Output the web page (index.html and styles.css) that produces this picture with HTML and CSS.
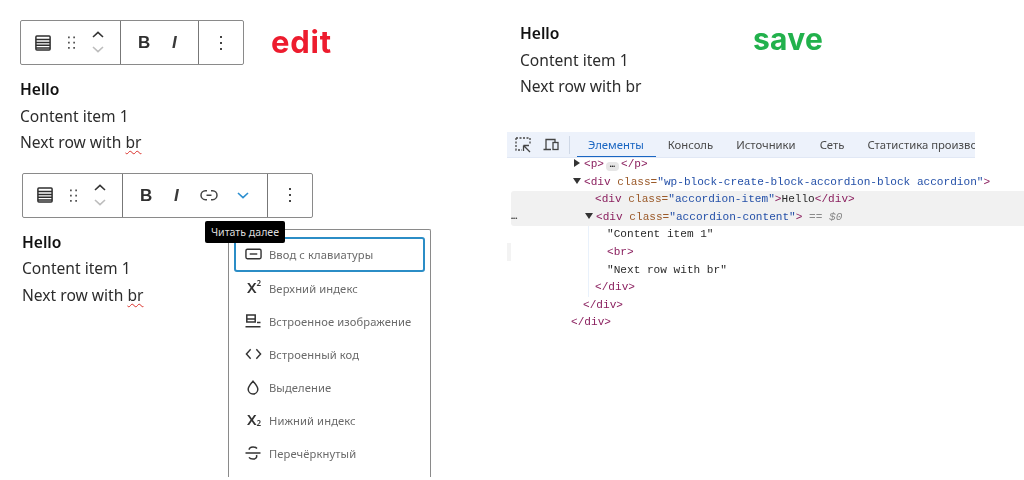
FILE: index.html
```html
<!DOCTYPE html>
<html lang="ru">
<head>
<meta charset="utf-8">
<title>edit / save</title>
<link rel="stylesheet" href="styles.css">
</head>
<body>
<main class="page">
  <section class="left">
    <div class="head">
      <div class="toolbar">
        <div class="seg seg-block">
          <svg class="ic ic-table" viewBox="0 0 16 16"><rect x="0.9" y="0.9" width="14.2" height="14.2" rx="1" class="st"/><path d="M1 4.6h14M1 7.4h14M1 10.2h14M1 13h14" class="st"/></svg>
          <svg class="ic ic-drag" viewBox="0 0 8 14"><path d="M0 0h2v2H0zM6 0h2v2H6zM0 6h2v2H0zM6 6h2v2H6zM0 12h2v2H0zM6 12h2v2H6z" class="fl"/></svg>
          <span class="mover">
            <svg class="chev" viewBox="0 0 12 7"><path d="M1 6l5-4.6L11 6" class="st"/></svg>
            <svg class="chev off" viewBox="0 0 12 7"><path d="M1 1l5 4.6L11 1" class="st"/></svg>
          </span>
        </div>
        <div class="seg seg-format">
          <span class="fmt-b">B</span>
          <span class="fmt-i">I</span>
        </div>
        <div class="seg seg-more">
          <svg class="ic ic-dots" viewBox="0 0 2 14"><path d="M0 0h2v2H0zM0 6h2v2H0zM0 12h2v2H0z" class="fl"/></svg>
        </div>
      </div>
      <span class="tag tag-edit">edit</span>
    </div>
    <div class="text">
      <div class="title">Hello</div>
      <div>Content item 1</div>
      <div>Next row with <span class="typo">br</span></div>
    </div>

    <div class="second">
      <div class="toolbar">
        <div class="seg seg-block">
          <svg class="ic ic-table" viewBox="0 0 16 16"><rect x="0.9" y="0.9" width="14.2" height="14.2" rx="1" class="st"/><path d="M1 4.6h14M1 7.4h14M1 10.2h14M1 13h14" class="st"/></svg>
          <svg class="ic ic-drag" viewBox="0 0 8 14"><path d="M0 0h2v2H0zM6 0h2v2H6zM0 6h2v2H0zM6 6h2v2H6zM0 12h2v2H0zM6 12h2v2H6z" class="fl"/></svg>
          <span class="mover">
            <svg class="chev" viewBox="0 0 12 7"><path d="M1 6l5-4.6L11 6" class="st"/></svg>
            <svg class="chev off" viewBox="0 0 12 7"><path d="M1 1l5 4.6L11 1" class="st"/></svg>
          </span>
        </div>
        <div class="seg seg-format wide">
          <span class="fmt-b">B</span>
          <span class="fmt-i">I</span>
          <svg class="ic ic-link" viewBox="0 0 24 24"><path d="M10 17.389H8.444A5.194 5.194 0 1 1 8.444 7H10v1.5H8.444a3.694 3.694 0 0 0 0 7.389H10v1.5ZM14 7h1.556a5.194 5.194 0 0 1 0 10.39H14v-1.5h1.556a3.694 3.694 0 0 0 0-7.39H14V7Zm-4.5 6h5v-1.5h-5V13Z" class="fl"/></svg>
          <svg class="chev blue" viewBox="0 0 12 7"><path d="M1 1l5 4.6L11 1" class="st"/></svg>
        </div>
        <div class="seg seg-more">
          <svg class="ic ic-dots" viewBox="0 0 2 14"><path d="M0 0h2v2H0zM0 6h2v2H0zM0 12h2v2H0z" class="fl"/></svg>
        </div>
      </div>
      <div class="text">
        <div class="title">Hello</div>
        <div>Content item 1</div>
        <div>Next row with <span class="typo">br</span></div>
      </div>

      <div class="menu">
        <div class="item focus">
          <span class="mi"><svg viewBox="0 0 18 12" class="i18"><rect x="1" y="1" width="16" height="10" rx="1.5" class="st"/><path d="M5 6h8" class="st"/></svg></span>
          <span>Ввод с клавиатуры</span>
        </div>
        <div class="item">
          <span class="mi mi-x">X<sup>2</sup></span>
          <span>Верхний индекс</span>
        </div>
        <div class="item">
          <span class="mi"><svg viewBox="0 0 16 14" class="i16"><path d="M1.8 1h8.4v7H1.8zM2 5h8M0.5 12.8h15M12 8.5h3.5" class="st"/></svg></span>
          <span>Встроенное изображение</span>
        </div>
        <div class="item">
          <span class="mi"><svg viewBox="0 0 18 12" class="i18"><path d="M6 1L1.5 6 6 11M12 1l4.500 5L12 11" class="st"/></svg></span>
          <span>Встроенный код</span>
        </div>
        <div class="item">
          <span class="mi"><svg viewBox="0 0 12 15" class="i12"><path d="M6 1.200c2.400 3 4.800 5.200 4.800 8A4.800 4.800 0 0 1 1.200 9.200C1.200 6.400 3.600 4.200 6 1.200z" class="st"/></svg></span>
          <span>Выделение</span>
        </div>
        <div class="item">
          <span class="mi mi-x">X<sub>2</sub></span>
          <span>Нижний индекс</span>
        </div>
        <div class="item">
          <span class="mi"><svg viewBox="0 0 16 14" class="i16"><path d="M12 2.500C11 1.300 9.500 1 8 1 6 1 4.200 1.800 4.200 3.800M0.500 7h15M11.500 9c.8 2.500-1 4-3.500 4-1.700 0-3.200-.5-4-1.700" class="st"/></svg></span>
          <span>Перечёркнутый</span>
        </div>
      </div>
      <div class="tooltip">Читать далее</div>
    </div>
  </section>

  <section class="right">
    <div class="top">
      <div class="text">
        <div class="title">Hello</div>
        <div>Content item 1</div>
        <div>Next row with br</div>
      </div>
      <span class="tag tag-save">save</span>
    </div>

    <div class="devtools">
      <div class="tabs">
        <svg class="dt-ic" viewBox="0 0 16 16"><path d="M1 1h14v7M1 1v12h6" class="dash"/><path d="M8.500 8.500h5.500M8.500 8.500v5.500M8.500 8.500l6.500 6.500" class="st2"/></svg>
        <svg class="dt-ic second-ic" viewBox="0 0 16 14"><path d="M3 11V1.500h9V4M0.500 11.500h7.500" class="st2"/><rect x="10" y="4.500" width="5" height="7" class="st2"/></svg>
        <span class="sep"></span>
        <span class="tab active">Элементы</span>
        <span class="tab t2">Консоль</span>
        <span class="tab t3">Источники</span>
        <span class="tab t4">Сеть</span>
        <span class="tab t5">Статистика производительности</span>
      </div>
      <div class="code">
        <div class="ln in-p"><span class="arr right-arr"></span><b>&lt;p&gt;</b><span class="pill">•••</span><b>&lt;/p&gt;</b></div>
        <div class="ln in-0"><span class="arr down-arr"></span><b>&lt;div</b> <i>class=</i><u>"wp-block-create-block-accordion-block accordion"</u><b>&gt;</b></div>
        <div class="hl">
          <div class="ln in-1"><b>&lt;div</b> <i>class=</i><u>"accordion-item"</u><b>&gt;</b>Hello<b>&lt;/div&gt;</b></div>
          <div class="ln in-1b"><span class="arr down-arr"></span><b>&lt;div</b> <i>class=</i><u>"accordion-content"</u><b>&gt;</b> <em>== $0</em></div>
          <span class="gutter">•••</span>
        </div>
        <div class="guide">
          <span class="edge"></span>
          <div class="ln in-2">"Content item 1"</div>
          <div class="ln in-2"><b>&lt;br&gt;</b></div>
          <div class="ln in-2">"Next row with br"</div>
          <div class="ln in-1c"><b>&lt;/div&gt;</b></div>
        </div>
        <div class="ln in-0c"><b>&lt;/div&gt;</b></div>
        <div class="ln in-00"><b>&lt;/div&gt;</b></div>
      </div>
    </div>
  </section>
</main>
</body>
</html>
```
FILE: styles.css
```css
* { box-sizing: border-box; }
html, body { margin: 0; padding: 0; background: #fff; }
.page {
  width: 1024px; height: 480px; overflow: hidden;
  display: grid; grid-template-columns: 507px 517px;
  font-family: "Noto Sans", "Open Sans", sans-serif;
  color: #2a2a2a;
  filter: blur(0.3px);
}
.st { fill: none; stroke: currentColor; stroke-width: 1.5; }
.st2 { fill: none; stroke: currentColor; stroke-width: 1.3; }
.dash { fill: none; stroke: currentColor; stroke-width: 1.3; stroke-dasharray: 2 1.5; }
.fl { fill: currentColor; stroke: none; }

.left { padding: 20px 0 0 20px; }
.head { display: flex; align-items: flex-start; gap: 27px; }
.toolbar {
  display: inline-flex; height: 45px;
  border: 1.5px solid #8a8a8a; border-radius: 2px; background: #fff;
  color: #2f2f2f;
}
.seg { display: flex; align-items: center; height: 100%; position: relative; }
.seg + .seg { border-left: 1.5px solid #777; }
.seg-block { width: 99px; padding-left: 14px; }
.seg-format { width: 78px; padding-left: 17px; gap: 0; }
.seg-format.wide { width: 145px; }
.seg-more { width: 45px; justify-content: center; padding-top: 0; }
.ic { display: block; flex: none; }
.ic-table { width: 16px; height: 16px; }
.ic-drag { width: 7px; height: 13px; margin-left: 17px; color: #555; }
.ic-dots { width: 2px; height: 14px; color: #444; }
.ic-link { width: 24px; height: 24px; margin-left: 17px; color: #444; }
.mover { display: flex; flex-direction: column; gap: 8px; margin-left: 17px; width: 12px; margin-top: -1px; }
.chev { display: block; width: 12px; height: 7px; color: #333; }
.chev .st { stroke-width: 1.6; }
.chev.off { color: #bdbdbd; }
.chev.blue { color: #2c8fd0; margin-left: 16px; }
.fmt-b { font: 700 17px/1 "Liberation Sans", sans-serif; width: 12px; }
.fmt-i { font: italic 700 17px/1 "Liberation Sans", sans-serif; width: 6px; margin-left: 22px; color: #3a3a3a; }

.tag { font: 700 30px/1 Inter, "Noto Sans", sans-serif; }
.tag-edit { color: #ed1c2e; margin: 6px 0 0 0; font-size: 31px; letter-spacing: 0.8px; }
.tag-save { color: #22b14c; letter-spacing: 0.3px; margin: 4px 0 0 112px; }

.text { font-size: 15.6px; line-height: 26.6px; margin-top: 11px; color: #2c2c2c; }
.title { font-weight: 600; color: #111; }
.typo { text-decoration: underline wavy #d9312b 1px; text-underline-offset: 2px; }

.second { position: relative; margin: 17px 0 0 2px; }

.menu {
  position: absolute; left: 206px; top: 56px;
  width: 203px; height: 248px;
  border: 1.5px solid #8a8a8a; border-bottom: 0; border-radius: 2px 2px 0 0;
  background: #fff; padding: 7px 5px 0 5px;
  font-size: 11.2px; color: #6a6a6a; letter-spacing: 0.1px;
}
.item { display: flex; align-items: center; height: 33px; padding-left: 11px; }
.item.focus { height: 35px; border: 2px solid #2b8dc6; border-radius: 3px; padding-left: 9px; margin-bottom: -0.25px; }
.mi { width: 24px; margin-right: 0; flex: none; display: flex; align-items: center; color: #333; }
.mi svg { display: block; }
.i18 { width: 17px; height: 12px; }
.i16 { width: 16px; height: 14px; }
.i12 { width: 12px; height: 15px; margin-left: 2px; }
.mi-x { font-size: 15px; font-weight: 600; line-height: 1; letter-spacing: 0; padding-left: 2px; margin-top: -2px; }
.mi-x sup { font-size: 8px; align-self: flex-start; margin-top: -1px; line-height: 1; }
.mi-x sub { font-size: 8px; align-self: flex-end; margin-bottom: 0; line-height: 1; }

.tooltip {
  position: absolute; left: 183px; top: 48px;
  width: 80px; height: 22px; border-radius: 2px;
  background: #000; color: #ddd;
  font-size: 10.6px; line-height: 22px; text-align: center;
}

.right { padding-top: 9px; }
.top { display: flex; align-items: flex-start; padding-left: 13px; height: 123px; }
.top .text { width: 121px; white-space: nowrap; }
.top .tag-save { margin-top: 15px; }

.devtools { width: 517px; }
.tabs {
  width: 468px; height: 26px; background: #edf2fb; overflow: hidden;
  display: flex; align-items: center; position: relative;
  font-size: 11.3px; color: #4a4a4a; white-space: nowrap;
  border-bottom: 1px solid #e1e8f5;
}
.dt-ic { width: 16px; height: 16px; margin-left: 8px; flex: none; color: #444; }
.dt-ic.second-ic { margin-left: 12px; width: 16px; height: 14px; }
.sep { width: 1px; height: 18px; background: #cfd8e6; margin-left: 10px; flex: none; }
.tab { flex: none; line-height: 26px; }
.tab.active { color: #1a66c2; margin-left: 7px; padding: 0 12px 0 11px; border-bottom: 2px solid #1a66c2; height: 26px; }
.t2 { margin-left: 12px; }
.t3 { margin-left: 23px; }
.t4 { margin-left: 24px; }
.t5 { margin-left: 23px; }

.code {
  font-family: "Liberation Mono", "DejaVu Sans Mono", monospace;
  font-size: 11.1px; color: #2a2a2a; margin-top: -2px;
}
.ln { height: 17.6px; line-height: 17.6px; white-space: pre; position: relative; }
.ln b { font-weight: 400; color: #8a1f5e; }
.ln i { font-style: normal; color: #9b5a2a; }
.ln u { text-decoration: none; color: #2450a8; }
.ln em { color: #8a8a8a; font-style: italic; }
.arr { position: absolute; width: 0; height: 0; }
.down-arr { margin: 4px 0 0 -11px; border-left: 4.5px solid transparent; border-right: 4.5px solid transparent; border-top: 6.5px solid #333; }
.right-arr { margin: 3px 0 0 -10px; border-top: 4.5px solid transparent; border-bottom: 4.5px solid transparent; border-left: 6.5px solid #333; }
.in-p, .in-0 { padding-left: 77px; }
.in-1 { padding-left: 88px; }
.in-1b { padding-left: 89px; }
.in-2 { padding-left: 100px; }
.in-1c { padding-left: 88px; }
.in-0c { padding-left: 76px; }
.in-00 { padding-left: 64px; }
.pill { display: inline-block; height: 9px; width: 13px; margin: 0 2px; font: 700 5px/9px "Liberation Sans", sans-serif; text-align: center; color: #222; background: #e6e6e6; border-radius: 4px; vertical-align: -1px; }
.hl { background: #f1f1f1; border-radius: 3px 0 0 3px; position: relative; margin-left: 4px; }
.hl .ln { margin-left: -4px; }
.gutter { position: absolute; left: 0; bottom: 3px; font: 700 6px/10px "Liberation Sans", sans-serif; color: #444; }
.guide { position: relative; background: linear-gradient(#e9f1fb, #e9f1fb) 81px 0 / 1px 100% no-repeat; }
.edge { position: absolute; left: 0; top: 17px; width: 4px; height: 18px; background: #f3f3f3; }
```
